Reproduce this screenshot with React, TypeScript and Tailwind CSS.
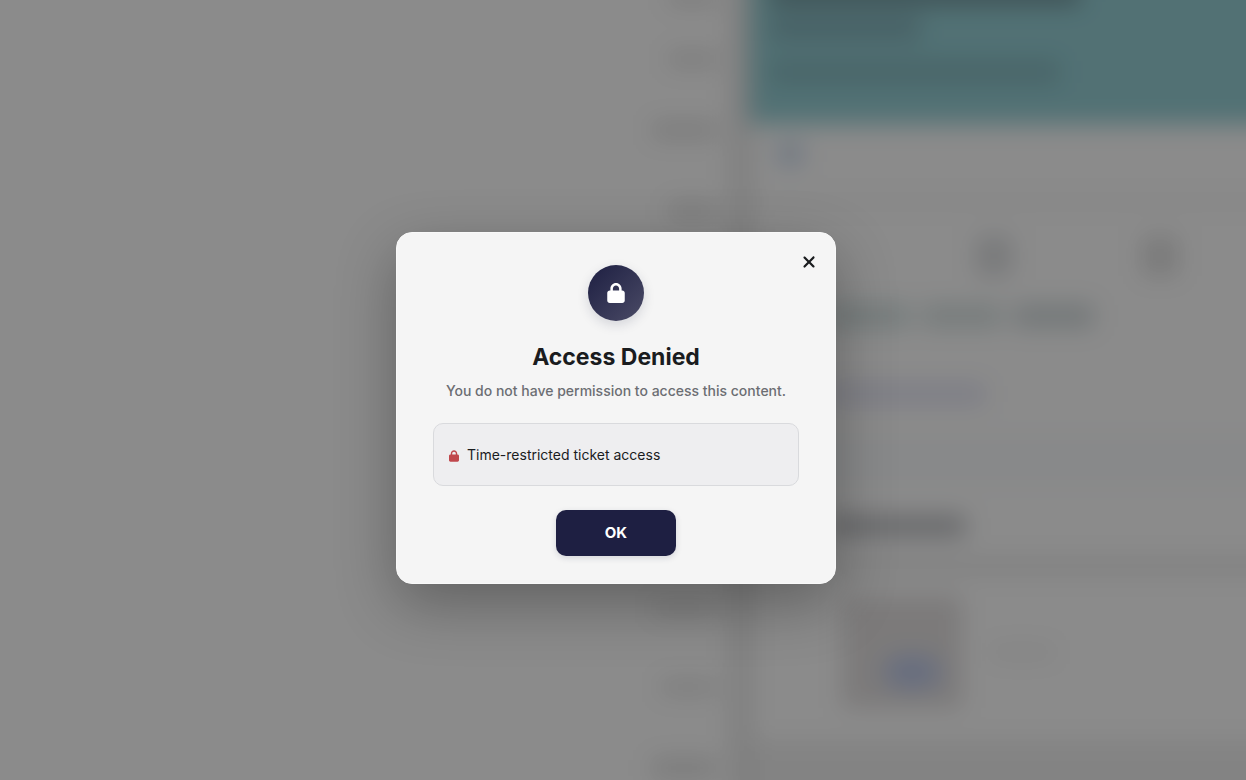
import React, { useState } from 'react';
import { FaLock, FaXmark } from 'react-icons/fa6';

interface AccessDeniedDialogProps {
  reasons: string[];
  onClose: () => void;
}

function AccessDeniedDialog({ reasons, onClose }: AccessDeniedDialogProps) {
  return (
    <div
      role="dialog"
      aria-modal="true"
      aria-labelledby="denied-title"
      aria-describedby="denied-text"
      className="relative flex w-full max-w-[440px] flex-col items-center rounded-2xl border border-[#f9f9f9] bg-[#f5f5f5] px-9 pt-8 pb-[27px] shadow-[0_20px_60px_rgba(0,0,0,0.3)]"
    >
      <button
        type="button"
        aria-label="Close"
        onClick={onClose}
        className="absolute top-[13px] right-2.5 flex h-8 w-8 items-center justify-center rounded-lg text-[#1a1c1e] hover:bg-black/5"
      >
        <FaXmark className="h-[18px] w-[18px]" />
      </button>

      <div className="flex h-14 w-14 items-center justify-center rounded-full bg-linear-135 from-[#1e1f42] to-[#4b4b66] text-white shadow-[0_4px_12px_rgba(30,31,66,0.15)]">
        <FaLock className="h-5 w-5" />
      </div>

      <h2 id="denied-title" className="mt-5 text-[23px] leading-8 font-bold text-[#1a1c1e]">
        Access Denied
      </h2>
      <p id="denied-text" className="mt-1.5 text-center text-sm leading-6 font-medium text-[#6c6e73]">
        You do not have permission to access this content.
      </p>

      <ul className="mt-5 w-full rounded-[10px] border border-[#d9dadd] bg-[#eeeef0] px-[15px] py-5">
        {reasons.map((reason) => (
          <li key={reason} className="flex items-center gap-2 text-sm leading-[21px] text-[#1a1c1e]">
            <FaLock className="mt-0.5 h-3 w-[10px] text-[#c0474c]" />
            {reason}
          </li>
        ))}
      </ul>

      <button
        type="button"
        onClick={onClose}
        className="mt-6 h-[46px] w-[120px] rounded-[10px] bg-[#1e1f42] text-[15px] font-bold text-white shadow-[0_2px_6px_rgba(30,31,66,0.15)] hover:bg-[#2a2b55]"
      >
        OK
      </button>
    </div>
  );
}

// Bleeds past the window so that the blur does not fade out at the edges
function Backdrop() {
  return (
    <div aria-hidden="true" className="absolute -inset-8 flex overflow-hidden bg-[#fdfdfd] blur-[12px]">
      <div className="flex w-[58%] flex-col items-end gap-[63px] pt-6 pr-3">
        <div className="h-3 w-12 bg-[#dadada]" />
        <div className="-mt-4 h-4 w-12 bg-[#e2e2e2]" />
        <div className="-mt-2 h-4 w-16 bg-[#dedede]" />
        <div className="h-5 w-12 bg-[#e4e4e4]" />
        <div className="h-4 w-14 bg-[#e4e4e4]" />
        <div className="h-4 w-14 bg-[#e4e4e4]" />
        <div className="h-4 w-14 bg-[#e4e4e4]" />
        <div className="h-4 w-14 bg-[#e4e4e4]" />
        <div className="h-4 w-16 bg-[#e8e8e8]" />
        <div className="h-4 w-14 bg-[#e4e4e4]" />
        <div className="h-5 w-16 bg-[#e0e0e0]" />
      </div>
      <div className="w-5 bg-[#ebebeb]" />
      <div className="min-w-0 flex-1 border-l-2 border-[#c4c4c4]">
        <div className="flex h-[156px] flex-col items-start bg-[#95ced4] px-5 pt-4">
          <div className="h-5 w-[310px] bg-[#6e8f96]" />
          <div className="mt-3 h-6 w-[150px] bg-[#82b0b8]" />
          <div className="mt-5 h-6 w-[290px] bg-[#85b8be]" />
        </div>
        <div className="mt-5 ml-7 h-5 w-6 bg-[#c2d4ea]" />
        <div className="mt-8 h-3 bg-[#f4f4f4]" />
        <div className="mt-7 flex items-center gap-[130px] pl-[226px]">
          <div className="h-10 w-9 bg-[#dcdee0]" />
          <div className="h-10 w-9 bg-[#dfdfdf]" />
        </div>
        <div className="mt-7 flex gap-3 pl-20">
          <div className="h-6 w-20 bg-[#d4e2e2]" />
          <div className="h-6 w-20 bg-[#d8e2e2]" />
          <div className="h-6 w-20 bg-[#d2dadc]" />
        </div>
        <div className="mt-14 ml-20 h-5 w-[155px] bg-[#e2e3f3]" />
        <div className="mt-8 h-12 bg-[#f7f9fb]" />
        <div className="mt-8 ml-20 h-5 w-[135px] bg-[#b8babe]" />
        <div className="mt-5 ml-20 h-5 bg-[#ededed]" />
        <div className="mt-5 ml-[92px] flex items-center">
          <div className="flex h-[112px] w-[120px] flex-col items-center justify-end bg-[#e2dfdf] pb-5 pl-5">
            <div className="h-8 w-14 rounded-full bg-[#bbc7e8]" />
          </div>
          <div className="ml-7 h-3 w-16 bg-[#ececec]" />
        </div>
        <div className="mt-8 h-24 bg-[#efefef]" />
      </div>
    </div>
  );
}

export default function App() {
  const [open, setOpen] = useState(true);

  return (
    <div className="relative h-screen overflow-hidden font-['Inter',sans-serif]">
      <Backdrop />
      {open && (
        <div className="absolute inset-0 flex items-center justify-center bg-black/45 pt-9 pr-3.5">
          <AccessDeniedDialog reasons={['Time-restricted ticket access']} onClose={() => setOpen(false)} />
        </div>
      )}
    </div>
  );
}
